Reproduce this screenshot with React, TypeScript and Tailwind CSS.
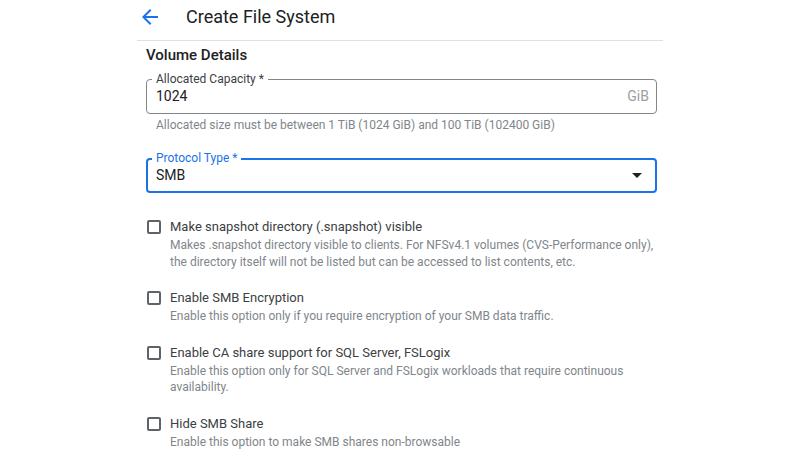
const FONT = "font-['Roboto','Liberation_Sans',sans-serif]";

const OPTIONS = [
  {
    label: "Make snapshot directory (.snapshot) visible",
    desc: "Makes .snapshot directory visible to clients. For NFSv4.1 volumes (CVS-Performance only), the directory itself will not be listed but can be accessed to list contents, etc.",
  },
  {
    label: "Enable SMB Encryption",
    desc: "Enable this option only if you require encryption of your SMB data traffic.",
  },
  {
    label: "Enable CA share support for SQL Server, FSLogix",
    desc: "Enable this option only for SQL Server and FSLogix workloads that require continuous availability.",
  },
  {
    label: "Hide SMB Share",
    desc: "Enable this option to make SMB shares non-browsable",
  },
];

const ArrowBack = () => (
  <svg width="24" height="24" viewBox="0 0 24 24" className="fill-[#1a73e8]">
    <path d="M20 11H7.83l5.59-5.59L12 4l-8 8 8 8 1.41-1.41L7.83 13H20v-2z" />
  </svg>
);

export default function App() {
  return (
    <div className={`w-[800px] h-[450px] bg-white overflow-hidden ${FONT}`}>
      <div className="mx-auto w-[526px]">
        {/* Header */}
        <div className="h-[41px] border-b border-[#e0e0e0]">
          <div className="flex items-center h-[33px] gap-6 pl-px">
            <button className="w-6 h-6 flex items-center justify-center">
              <ArrowBack />
            </button>
            <h1 className="text-[18px] leading-6 text-[#202124]">Create File System</h1>
          </div>
        </div>

        <div className="pl-[9px] pr-[6px]">
          <h2 className="mt-1 text-[15px] leading-5 font-medium text-[#202124]">Volume Details</h2>

          {/* Allocated capacity */}
          <div className="relative mt-[14px] h-[35px] border border-[#80868b] rounded flex items-center pl-[9px] pr-[7px]">
            <span className="absolute left-[5px] -top-[9px] bg-white px-1 text-[12px] leading-4 text-[#3c4043]">
              Allocated Capacity *
            </span>
            <span className="flex-1 text-[14px] text-[#202124]">1024</span>
            <span className="text-[14px] text-[#9aa0a6]">GiB</span>
          </div>
          <p className="mt-[3px] pl-[10px] text-[12px] leading-4 text-[#80868b]">
            Allocated size must be between 1 TiB (1024 GiB) and 100 TiB (102400 GiB)
          </p>

          {/* Protocol type */}
          <div className="relative mt-[25px] h-[35px] border-2 border-[#1a73e8] rounded flex items-center pl-[8px] pr-[13px]">
            <span className="absolute left-[4px] -top-[10px] bg-white px-1 text-[12px] leading-4 text-[#1a73e8]">
              Protocol Type *
            </span>
            <span className="flex-1 text-[14px] text-[#202124]">SMB</span>
            <svg width="10" height="5" viewBox="0 0 10 5" className="fill-[#202124]">
              <path d="M0 0l5 5 5-5z" />
            </svg>
          </div>

          {/* Options */}
          <div className="mt-6 flex flex-col gap-[18px]">
            {OPTIONS.map((o) => (
              <div key={o.label} className="flex items-start">
                <div className="h-5 flex items-center">
                  <span className="block w-[14px] h-[14px] ml-px border-2 border-[#5f6368] rounded-[2px]" />
                </div>
                <div className="ml-[9px] flex-1">
                  <div className="text-[13px] leading-5 text-[#3c4043]">{o.label}</div>
                  <div className="text-[12px] leading-[16.5px] text-[#80868b]">{o.desc}</div>
                </div>
              </div>
            ))}
          </div>
        </div>
      </div>
    </div>
  );
}
